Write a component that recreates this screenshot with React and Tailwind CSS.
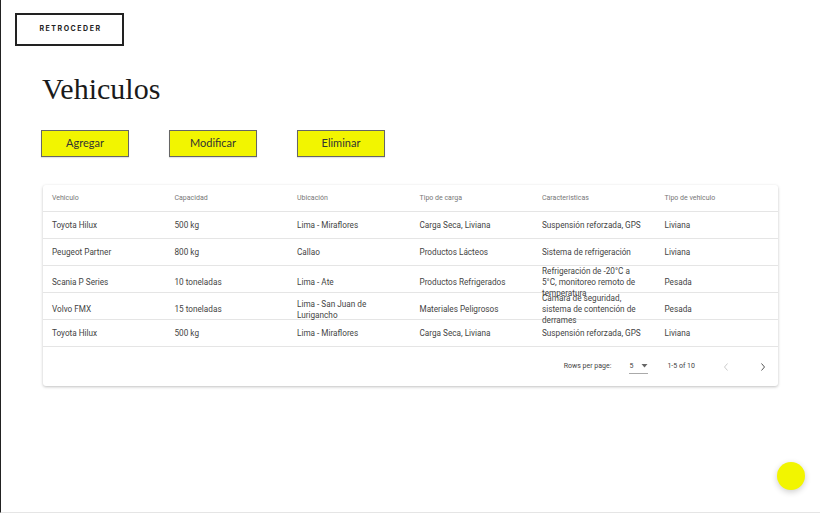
import React from "react";

const rows = [
  ["Toyota Hilux", "500 kg", "Lima - Miraflores", "Carga Seca, Liviana", "Suspensión reforzada, GPS", "Liviana"],
  ["Peugeot Partner", "800 kg", "Callao", "Productos Lácteos", "Sistema de refrigeración", "Liviana"],
  ["Scania P Series", "10 toneladas", "Lima - Ate", "Productos Refrigerados", "Refrigeración de -20°C a 5°C, monitoreo remoto de temperatura", "Pesada"],
  ["Volvo FMX", "15 toneladas", "Lima - San Juan de Lurigancho", "Materiales Peligrosos", "Cámara de seguridad, sistema de contención de derrames", "Pesada"],
  ["Toyota Hilux", "500 kg", "Lima - Miraflores", "Carga Seca, Liviana", "Suspensión reforzada, GPS", "Liviana"],
];

const headers = ["Vehiculo", "Capacidad", "Ubicación", "Tipo de carga", "Caracteristicas", "Tipo de vehiculo"];

export default function App() {
  return (
    <div className="w-[820px] h-[513px] bg-white border-l border-l-[#222] border-b border-b-[#e5e5e5] overflow-hidden relative">
      <div className="pt-[13px] pl-[14px]">
        <button className="w-[109px] h-[33px] border-2 border-[#222] flex items-center justify-center pl-[2px] text-[7px] font-bold tracking-[0.22em] text-[#222]" style={{ fontFamily: "Inter, 'Liberation Sans', sans-serif" }}>
          RETROCEDER
        </button>
      </div>
      <h1 className="pl-[41px] mt-[25px] text-[30px] leading-[36px] text-[#1a1a1a] font-normal" style={{ fontFamily: "'Liberation Serif', serif" }}>
        Vehiculos
      </h1>
      <div className="flex pl-[40px] mt-[23px] gap-[40px]" style={{ fontFamily: "Lato, 'Liberation Sans', sans-serif" }}>
        {["Agregar", "Modificar", "Eliminar"].map((b) => (
          <button key={b} className="w-[88px] h-[27px] bg-[#f2f500] border border-[#666] text-[11px] text-[#333] flex items-center justify-center shadow-[0_1px_1px_rgba(0,0,0,0.1)]">
            {b}
          </button>
        ))}
      </div>
      <div className="ml-[42px] mt-[28px] w-[735px] rounded-[3px] bg-white shadow-[0_1px_3px_rgba(0,0,0,0.25)]" style={{ fontFamily: "Roboto, 'Liberation Sans', sans-serif" }}>
        <div className="grid grid-cols-6 h-[27px] border-b border-[#e5e5e5] items-center">
          {headers.map((h) => (
            <div key={h} className="pl-[9px] text-[7px] font-normal text-[#777]">{h}</div>
          ))}
        </div>
        {rows.map((r, i) => (
          <div key={i} className="grid grid-cols-6 h-[27px] border-b border-[#e5e5e5] items-center">
            {r.map((c, j) => (
              <div key={j} className="pl-[9px] pr-[14px] text-[8.2px] leading-[11px] text-[#444] relative z-0">{c}</div>
            ))}
          </div>
        ))}
        <div className="h-[39px] flex items-center justify-end text-[7px] text-[#444]">
          <span>Rows per page:</span>
          <span className="ml-[18px] w-[19px] border-b border-[#aaa] flex items-center justify-between pb-[2px] mt-[2px] text-[7px]">
            <span>5</span>
            <svg width="7" height="4" viewBox="0 0 7 4"><path d="M0.5 0h6L3.5 3.5z" fill="#666" /></svg>
          </span>
          <span className="ml-[19px]">1-5 of 10</span>
          <svg className="ml-[27px]" width="8" height="10" viewBox="0 0 8 10"><path d="M5.5 1.5 2.5 5l3 3.5" fill="none" stroke="#ccc" strokeWidth="1" /></svg>
          <svg className="ml-[29px] mr-[11px]" width="8" height="10" viewBox="0 0 8 10"><path d="M2.5 1.5 5.5 5l-3 3.5" fill="none" stroke="#555" strokeWidth="1" /></svg>
        </div>
      </div>
      <div className="absolute left-[776px] top-[462px] w-[28px] h-[28px] rounded-full bg-[#f2f500] shadow-[0_2px_6px_rgba(0,0,0,0.2)]" />
    </div>
  );
}
